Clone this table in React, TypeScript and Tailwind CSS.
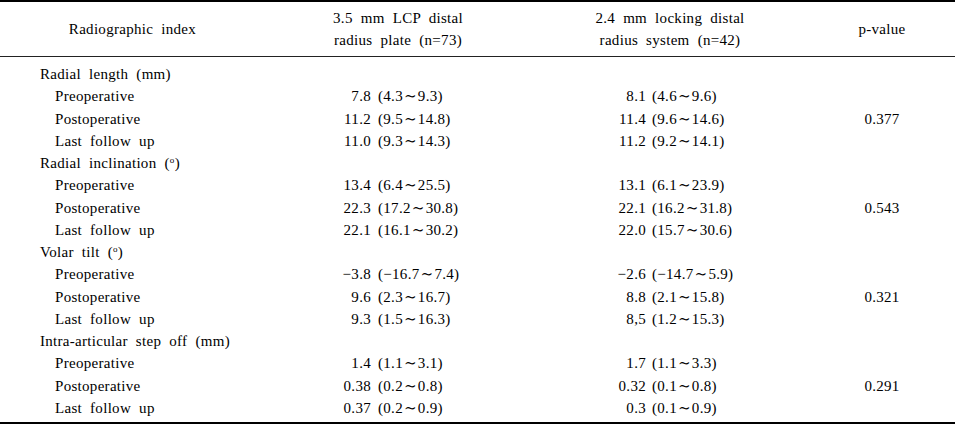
const groups = [
  {
    label: "Radial length (mm)",
    p: "0.377",
    rows: [
      ["Preoperative", "7.8", "(4.3∼9.3)", "8.1", "(4.6∼9.6)"],
      ["Postoperative", "11.2", "(9.5∼14.8)", "11.4", "(9.6∼14.6)"],
      ["Last follow up", "11.0", "(9.3∼14.3)", "11.2", "(9.2∼14.1)"],
    ],
  },
  {
    label: "Radial inclination",
    deg: true,
    p: "0.543",
    rows: [
      ["Preoperative", "13.4", "(6.4∼25.5)", "13.1", "(6.1∼23.9)"],
      ["Postoperative", "22.3", "(17.2∼30.8)", "22.1", "(16.2∼31.8)"],
      ["Last follow up", "22.1", "(16.1∼30.2)", "22.0", "(15.7∼30.6)"],
    ],
  },
  {
    label: "Volar tilt",
    deg: true,
    p: "0.321",
    rows: [
      ["Preoperative", "−3.8", "(−16.7∼7.4)", "−2.6", "(−14.7∼5.9)"],
      ["Postoperative", "9.6", "(2.3∼16.7)", "8.8", "(2.1∼15.8)"],
      ["Last follow up", "9.3", "(1.5∼16.3)", "8,5", "(1.2∼15.3)"],
    ],
  },
  {
    label: "Intra-articular step off (mm)",
    p: "0.291",
    rows: [
      ["Preoperative", "1.4", "(1.1∼3.1)", "1.7", "(1.1∼3.3)"],
      ["Postoperative", "0.38", "(0.2∼0.8)", "0.32", "(0.1∼0.8)"],
      ["Last follow up", "0.37", "(0.2∼0.9)", "0.3", "(0.1∼0.9)"],
    ],
  },
];

const cols = "grid grid-cols-[265px_266px_278px_1fr]";

function Row({ children }: { children: React.ReactNode }) {
  return <div className={`${cols} h-[22.25px] items-center`}>{children}</div>;
}

// split the range so the tilde gets a little air on each side
function Range({ text }: { text: string }) {
  const [a, b] = text.split("∼");
  return (
    <span>
      {a}
      <span className="mx-[1px]">∼</span>
      {b}
    </span>
  );
}

export default function App() {
  return (
    <div
      className="w-[955px] h-[427px] bg-white text-black text-[15px] tracking-[0.3px] [word-spacing:4px]"
      style={{ fontFamily: '"Liberation Serif", "DejaVu Serif", serif' }}
    >
      <div className="border-t-2 border-b-2 border-black">
        <div className={`${cols} h-[55px] items-center text-center leading-[22px] border-b border-[#222]`}>
          <div>Radiographic index</div>
          <div>
            3.5 mm LCP distal
            <br />
            radius plate (n=73)
          </div>
          <div>
            2.4 mm locking distal
            <br />
            radius system (n=42)
          </div>
          <div>p-value</div>
        </div>

        <div className="pt-[6px] pb-[3px]">
          {groups.map((g) => (
            <div key={g.label}>
              <Row>
                <div className="pl-[40px] whitespace-nowrap">
                  {g.label}
                  {g.deg && (
                    <>
                      {" "}(<sup className="text-[9px] -top-[5px]">o</sup>)
                    </>
                  )}
                </div>
              </Row>
              {g.rows.map((r, i) => (
                <Row key={r[0]}>
                  <div className="pl-[55px]">{r[0]}</div>
                  <div className="flex">
                    <span className="w-[106px] text-right">{r[1]}</span>
                    <span className="pl-[7px]">
                      <Range text={r[2]} />
                    </span>
                  </div>
                  <div className="flex">
                    <span className="w-[115px] text-right">{r[3]}</span>
                    <span className="pl-[6px]">
                      <Range text={r[4]} />
                    </span>
                  </div>
                  <div className="text-center">{i === 1 ? g.p : ""}</div>
                </Row>
              ))}
            </div>
          ))}
        </div>
      </div>
    </div>
  );
}
